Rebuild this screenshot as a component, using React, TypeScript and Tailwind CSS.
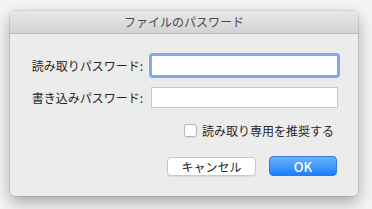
import React from "react";

const font = { fontFamily: '"Noto Sans CJK JP", "Noto Sans", sans-serif' };

export default function App() {
  return (
    <div
      className="w-[372px] h-[209px] bg-[#f4f4f4] overflow-hidden pt-[11px] pl-[10px]"
      style={font}
    >
      <div className="w-[348px] h-[185px] rounded-[5px] bg-[#ececec] shadow-[0_6px_16px_rgba(0,0,0,0.32),0_0_0_1px_rgba(0,0,0,0.08)] flex flex-col overflow-hidden">
        <div className="h-[23px] shrink-0 border-b border-[#b9b9b9] bg-gradient-to-b from-[#e9e9e9] to-[#d3d3d3] flex items-center justify-center text-[12px] leading-none text-[#4a4a4a]">
          ファイルのパスワード
        </div>
        <div className="flex flex-col pt-[21px] pr-[20px]">
          <div className="flex items-center h-[21px]">
            <div className="w-[133px] text-right text-[12px] leading-none text-[#262626]">
              読み取りパスワード:
            </div>
            <div className="ml-[8px] w-[187px] h-[21px] bg-white border border-[#86acef] ring-2 ring-[#7ea7ec] rounded-[2px]" />
          </div>
          <div className="flex items-center h-[21px] mt-[11px]">
            <div className="w-[133px] text-right text-[12px] leading-none text-[#262626]">
              書き込みパスワード:
            </div>
            <div className="ml-[8px] w-[187px] h-[21px] bg-white border border-[#c9c9c9]" />
          </div>
          <div className="flex items-center justify-end h-[13px] mt-[16px] pr-[4px]">
            <div className="w-[13px] h-[13px] bg-white border border-[#b8b8b8] rounded-[3px] shadow-[0_1px_1px_rgba(0,0,0,0.08)]" />
            <div className="ml-[5px] text-[12px] leading-none text-[#262626]">
              読み取り専用を推奨する
            </div>
          </div>
          <div className="flex items-center justify-end h-[20px] mt-[19px] pr-[1px]">
            <div className="w-[89px] h-[19px] mt-[1px] bg-white border border-[#c8c8c8] rounded-[4px] shadow-[0_1px_1px_rgba(0,0,0,0.08)] flex items-center justify-center text-[12px] leading-none text-[#262626]">
              キャンセル
            </div>
            <div className="ml-[13px] w-[68px] h-[20px] rounded-[4px] bg-gradient-to-b from-[#69b1fa] to-[#1a7ff9] border border-[#2b7be6] flex items-center justify-center text-[13px] leading-none font-medium text-white">
              OK
            </div>
          </div>
        </div>
      </div>
    </div>
  );
}
